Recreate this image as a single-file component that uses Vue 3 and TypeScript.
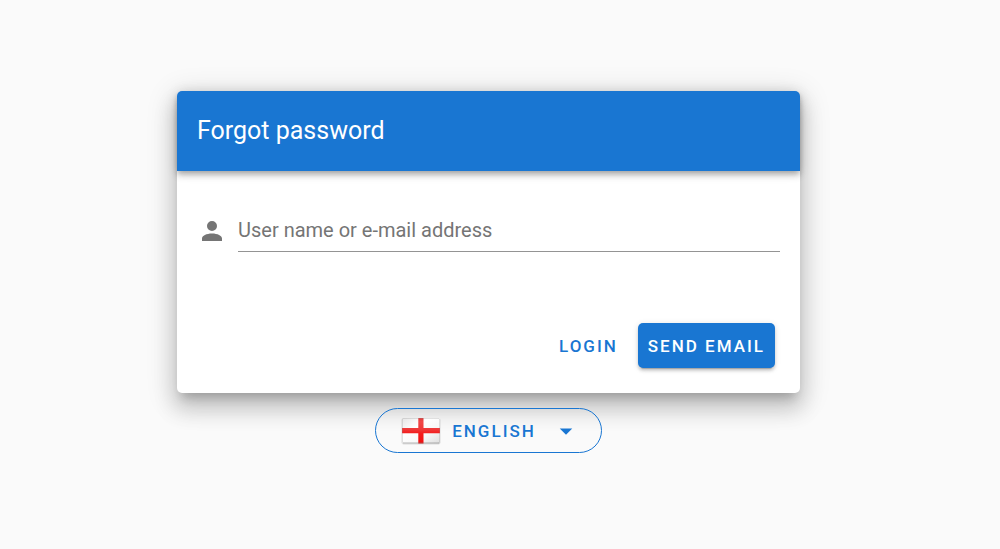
<script setup lang="ts">
import { ref } from 'vue'

const account = ref('')
const language = ref('English')
</script>

<template>
  <main class="page">
    <form class="card" @submit.prevent>
      <header class="toolbar">
        <h1 class="title">Forgot password</h1>
      </header>
      <div class="body">
        <svg class="person" viewBox="0 0 24 24" aria-hidden="true">
          <path d="M12 4a4 4 0 0 1 4 4 4 4 0 0 1-4 4 4 4 0 0 1-4-4 4 4 0 0 1 4-4m0 10c4.420 0 8 1.790 8 4v2H4v-2c0-2.210 3.580-4 8-4z" />
        </svg>
        <input
          id="account"
          v-model="account"
          class="field"
          type="text"
          aria-label="User name or e-mail address"
          placeholder="User name or e-mail address"
        />
      </div>
      <footer class="actions">
        <a class="btn" href="#login">Login</a>
        <button class="btn primary" type="submit">Send email</button>
      </footer>
    </form>

    <button class="language" type="button" aria-haspopup="listbox">
      <svg class="flag" viewBox="0 0 40 28" aria-hidden="true">
        <defs>
          <linearGradient id="cloth" x1="0" y1="0" x2="1" y2="1">
            <stop offset="0" stop-color="#e6e6e6" />
            <stop offset="0.35" stop-color="#ffffff" />
            <stop offset="0.65" stop-color="#f8f8f8" />
            <stop offset="1" stop-color="#dedede" />
          </linearGradient>
          <linearGradient id="cross" x1="0" y1="0" x2="0" y2="1">
            <stop offset="0" stop-color="#e03c3c" />
            <stop offset="0.15" stop-color="#f04848" />
            <stop offset="0.45" stop-color="#ee3838" />
            <stop offset="0.6" stop-color="#f41c1c" />
            <stop offset="1" stop-color="#f01010" />
          </linearGradient>
        </defs>
        <rect x="0.500" y="1" width="39" height="26.500" rx="2" fill="#000" opacity="0.12" />
        <rect x="1" y="1" width="38" height="25.500" rx="1" fill="url(#cloth)" />
        <path d="M17.300 1h5.200v10h16.500v5.300H22.500v10.200h-5.200V16.300H1V11h16.300z" fill="url(#cross)" />
        <rect x="1.500" y="1.500" width="37" height="24.500" rx="1" fill="none" stroke="#888" stroke-opacity="0.25" />
        <path d="M2 26h36" stroke="#666" stroke-opacity="0.3" />
      </svg>
      <span>{{ language }}</span>
      <svg class="caret" viewBox="0 0 24 24" aria-hidden="true">
        <path d="M7 10l5 5 5-5z" />
      </svg>
    </button>
  </main>
</template>

<style>
body {
  margin: 0;
  background: #fafafa;
}
</style>

<style scoped>
.page {
  box-sizing: border-box;
  min-height: 100vh;
  padding: 20px 43px 25px 20px;
  display: flex;
  flex-direction: column;
  align-items: center;
  justify-content: center;
  gap: 15px;
  background: #fafafa;
  font-family: Roboto, "Liberation Sans", sans-serif;
}

.card {
  width: 100%;
  max-width: 623px;
  border-radius: 5px;
  background: #fff;
  box-shadow:
    0 9px 10px -5px rgba(0, 0, 0, 0.2),
    0 15px 21px 3px rgba(0, 0, 0, 0.14),
    0 6px 28px 5px rgba(0, 0, 0, 0.12);
}

.toolbar {
  display: flex;
  align-items: center;
  height: 80px;
  padding: 0 20px;
  border-radius: 5px 5px 0 0;
  background: #1976d2;
  color: #fff;
  box-shadow:
    0 3px 5px -1px rgba(0, 0, 0, 0.2),
    0 5px 6px 0 rgba(0, 0, 0, 0.14),
    0 1px 13px 0 rgba(0, 0, 0, 0.12);
}

.title {
  margin: 0;
  font-size: 25px;
  font-weight: 400;
  line-height: 38px;
}

.body {
  display: flex;
  align-items: flex-start;
  gap: 11px;
  padding: 40px 20px 61px;
}

.person {
  flex: none;
  width: 30px;
  height: 30px;
  margin-top: 5px;
  fill: #757575;
}

.field {
  flex: 1;
  min-width: 0;
  height: 41px;
  box-sizing: border-box;
  padding: 0 0 2px;
  border: 0;
  border-bottom: 1px solid #949494;
  border-radius: 0;
  outline: none;
  background: transparent;
  color: #212121;
  font: 400 20px/25px Roboto, "Liberation Sans", sans-serif;
}

.field::placeholder {
  color: #757575;
  opacity: 1;
}

.actions {
  display: flex;
  justify-content: flex-end;
  gap: 10px;
  padding: 10px 25px 25px;
}

.btn,
.language {
  display: inline-flex;
  align-items: center;
  justify-content: center;
  box-sizing: border-box;
  height: 45px;
  border: 0;
  background: transparent;
  color: #1976d2;
  font: 500 17px/22px Roboto, "Liberation Sans", sans-serif;
  letter-spacing: 2px;
  text-decoration: none;
  text-transform: uppercase;
  white-space: nowrap;
  cursor: pointer;
}

.btn {
  padding: 0 10px;
  border-radius: 5px;
}

.primary {
  background: #1976d2;
  color: #fff;
  box-shadow:
    0 4px 1px -3px rgba(0, 0, 0, 0.2),
    0 3px 3px 0 rgba(0, 0, 0, 0.14),
    0 1px 6px 0 rgba(0, 0, 0, 0.12);
}

.language {
  padding: 0 20px 0 25px;
  border: 1px solid #1976d2;
  border-radius: 23px;
}

.flag {
  width: 40px;
  height: 28px;
  margin-right: 11px;
}

.caret {
  width: 30px;
  height: 30px;
  margin-left: 15px;
  fill: #1976d2;
}
</style>
